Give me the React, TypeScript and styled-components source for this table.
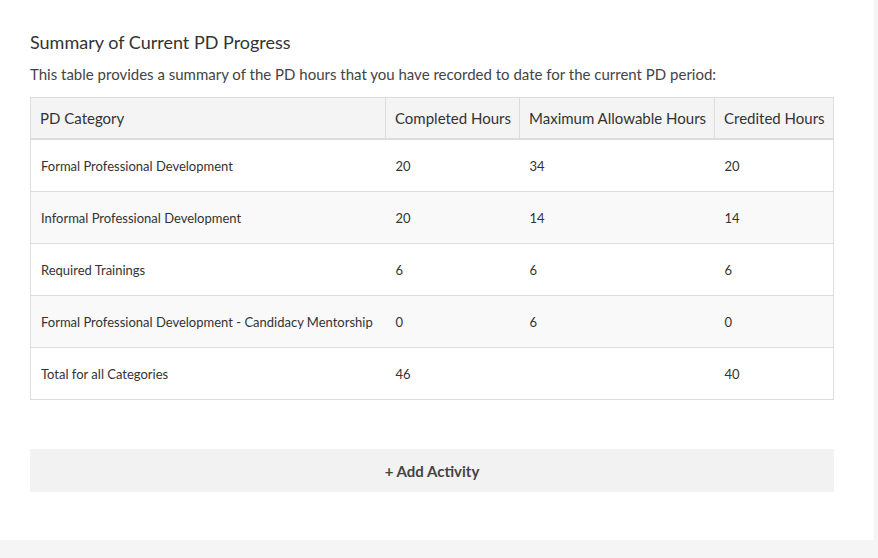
import React from 'react'
import styled, { createGlobalStyle } from 'styled-components'

const GlobalStyle = createGlobalStyle`
  html, body {
    margin: 0;
    padding: 0;
    background: #f5f5f5;
    font-family: Lato, "Open Sans", sans-serif;
    color: #333;
  }
`

const Page = styled.div`
  width: 874px;
  height: 540px;
  background: #fff;
  box-sizing: border-box;
  padding: 31px 40px 0 30px;
`

const Title = styled.h3`
  margin: 0;
  font-size: 18px;
  font-weight: 400;
  line-height: 22px;
  color: #333;
`

const Intro = styled.p`
  margin: 11px 0 13px;
  font-size: 15px;
  line-height: 20px;
  color: #444;
`

const Table = styled.table`
  width: 803px;
  table-layout: fixed;
  border-collapse: collapse;
  border: 1px solid #ddd;
`

const HeadCell = styled.th`
  height: 40px;
  padding: 0 9px;
  background: #f4f4f4;
  border: 1px solid #ddd;
  border-bottom: 2px solid #ddd;
  text-align: left;
  font-size: 15px;
  font-weight: 400;
  color: #333;
  white-space: nowrap;
`

const Row = styled.tr<{ shaded?: boolean }>`
  background: ${({ shaded }) => (shaded ? '#f9f9f9' : '#fff')};
  border-top: 1px solid #ddd;
`

const Cell = styled.td`
  height: 51px;
  padding: 0 10px;
  font-size: 13px;
  color: #333;
  white-space: nowrap;
`

const AddButton = styled.button`
  display: flex;
  align-items: center;
  justify-content: center;
  width: 804px;
  height: 43px;
  margin-top: 49px;
  border: none;
  background: #f2f2f2;
  font-family: inherit;
  font-size: 15px;
  font-weight: 700;
  color: #444;
  cursor: pointer;
`

const columns = [
  { label: 'PD Category', width: 355 },
  { label: 'Completed Hours', width: 134 },
  { label: 'Maximum Allowable Hours', width: 195 },
  { label: 'Credited Hours', width: 119 },
]

const rows = [
  { name: 'Formal Professional Development', completed: '20', max: '34', credited: '20' },
  { name: 'Informal Professional Development', completed: '20', max: '14', credited: '14' },
  { name: 'Required Trainings', completed: '6', max: '6', credited: '6' },
  { name: 'Formal Professional Development - Candidacy Mentorship', completed: '0', max: '6', credited: '0' },
  { name: 'Total for all Categories', completed: '46', max: '', credited: '40' },
]

export default function App() {
  return (
    <>
      <GlobalStyle />
      <Page>
        <Title>Summary of Current PD Progress</Title>
        <Intro>This table provides a summary of the PD hours that you have recorded to date for the current PD period:</Intro>
        <Table>
          <colgroup>
            {columns.map((c) => (
              <col key={c.label} style={{ width: c.width }} />
            ))}
          </colgroup>
          <thead>
            <tr>
              {columns.map((c) => (
                <HeadCell key={c.label}>{c.label}</HeadCell>
              ))}
            </tr>
          </thead>
          <tbody>
            {rows.map((r, i) => (
              <Row key={r.name} shaded={i % 2 === 1}>
                <Cell>{r.name}</Cell>
                <Cell>{r.completed}</Cell>
                <Cell>{r.max}</Cell>
                <Cell>{r.credited}</Cell>
              </Row>
            ))}
          </tbody>
        </Table>
        <AddButton>+ Add Activity</AddButton>
      </Page>
    </>
  )
}
